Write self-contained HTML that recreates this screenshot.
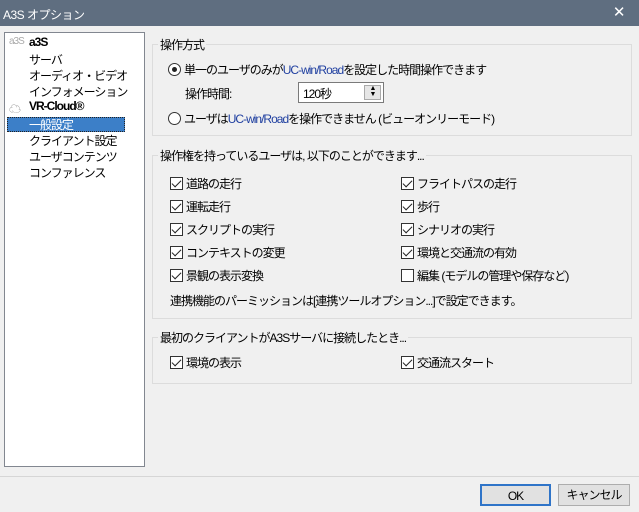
<!DOCTYPE html>
<html><head><meta charset="utf-8"><style>
*{margin:0;padding:0;box-sizing:border-box}
body{width:639px;height:512px;background:#f0f0f0;font-family:"Liberation Sans","Noto Sans CJK JP",sans-serif;font-size:12px;color:#000;position:relative;overflow:hidden}
.a{position:absolute;white-space:nowrap}
.title{left:0;top:0;width:639px;height:26px;background:#5f6e80;color:#fff;font-size:12px;padding:6px 0 0 3px;letter-spacing:-0.5px}
.tree{left:4px;top:32px;width:141px;height:435px;background:#fff;border:1px solid #828790;letter-spacing:-1px}
.grp{position:absolute;border:1px solid #dcdcdc;letter-spacing:-1px}
.lg{position:absolute;background:#f0f0f0;padding:0 2px;top:-9px;left:5px}
.cb{display:inline-block;width:13px;height:13px;border:1px solid #333;background:#fff;vertical-align:-2px;margin-right:3px;position:relative}
.cb.k::after{content:"";position:absolute;left:3px;top:0px;width:4px;height:8px;border:solid #222;border-width:0 1.5px 1.5px 0;transform:rotate(45deg)}
.rd{display:inline-block;width:13px;height:13px;border:1px solid #333;border-radius:50%;background:#fff;vertical-align:-2px;margin-right:3px;position:relative}
.rd.k::after{content:"";position:absolute;left:3px;top:3px;width:5px;height:5px;border-radius:50%;background:#222}
.btn{position:absolute;height:22px;border:1px solid #adadad;background:#e1e1e1;text-align:center;line-height:20px;letter-spacing:-1px}
.blue{color:#1f3fa0}
</style></head><body>
<div class="a title">A3S オプション<span style="position:absolute;right:14px;top:3px;font-size:15px">✕</span></div>
<div class="a tree">
<div class="a" style="left:4px;top:3px;color:#aaa;font-size:10px">a3S</div>
<div class="a" style="left:24px;top:2px;font-weight:bold">a3S</div>
<div class="a" style="left:24px;top:18px">サーバ</div>
<div class="a" style="left:24px;top:34px">オーディオ・ビデオ</div>
<div class="a" style="left:24px;top:50px">インフォメーション</div>
<div class="a" style="left:4px;top:67px;color:#888">☁</div>
<div class="a" style="left:24px;top:66px;font-weight:bold">VR-Cloud®</div>
<div class="a" style="left:2px;top:84px;width:118px;height:15px;background:#3c7fc8;border:1px dotted #222"></div>
<div class="a" style="left:24px;top:83px;color:#fff">一般設定</div>
<div class="a" style="left:24px;top:99px">クライアント設定</div>
<div class="a" style="left:24px;top:115px">ユーザコンテンツ</div>
<div class="a" style="left:24px;top:131px">コンファレンス</div>
</div>

<div class="grp" style="left:152px;top:44px;width:480px;height:92px"><span class="lg">操作方式</span>
<div class="a" style="left:15px;top:16px"><span class="rd k"></span>単一のユーザのみが<span class="blue">UC-win/Road</span>を設定した時間操作できます</div>
<div class="a" style="left:32px;top:40px">操作時間:</div>
<div class="a" style="left:145px;top:37px;width:86px;height:21px;border:1px solid #7a7a7a;background:#fff;padding:2px 0 0 4px">120秒
<div class="a" style="right:2px;top:2px;width:17px;height:15px;background:#e6e6e6;border:1px solid #aaa;font-size:7px;line-height:6px;text-align:center">▲<br>▼</div></div>
<div class="a" style="left:15px;top:65px"><span class="rd"></span>ユーザは<span class="blue">UC-win/Road</span>を操作できません (ビューオンリーモード)</div>
</div>

<div class="grp" style="left:152px;top:155px;width:480px;height:164px"><span class="lg">操作権を持っているユーザは, 以下のことができます...</span>
<div class="a" style="left:17px;top:19px"><span class="cb k"></span>道路の走行</div>
<div class="a" style="left:17px;top:42px"><span class="cb k"></span>運転走行</div>
<div class="a" style="left:17px;top:65px"><span class="cb k"></span>スクリプトの実行</div>
<div class="a" style="left:17px;top:88px"><span class="cb k"></span>コンテキストの変更</div>
<div class="a" style="left:17px;top:111px"><span class="cb k"></span>景観の表示変換</div>
<div class="a" style="left:248px;top:19px"><span class="cb k"></span>フライトパスの走行</div>
<div class="a" style="left:248px;top:42px"><span class="cb k"></span>歩行</div>
<div class="a" style="left:248px;top:65px"><span class="cb k"></span>シナリオの実行</div>
<div class="a" style="left:248px;top:88px"><span class="cb k"></span>環境と交通流の有効</div>
<div class="a" style="left:248px;top:111px"><span class="cb"></span>編集 (モデルの管理や保存など)</div>
<div class="a" style="left:17px;top:136px">連携機能のパーミッションは[連携ツールオプション...]で設定できます。</div>
</div>

<div class="grp" style="left:152px;top:337px;width:480px;height:47px"><span class="lg">最初のクライアントがA3Sサーバに接続したとき...</span>
<div class="a" style="left:17px;top:16px"><span class="cb k"></span>環境の表示</div>
<div class="a" style="left:248px;top:16px"><span class="cb k"></span>交通流スタート</div>
</div>

<div class="a" style="left:0;top:476px;width:639px;border-top:1px solid #d6d6d6"></div>
<div class="btn" style="left:480px;top:484px;width:71px;border:2px solid #2f74c8">OK</div>
<div class="btn" style="left:558px;top:484px;width:72px">キャンセル</div>
</body></html>
